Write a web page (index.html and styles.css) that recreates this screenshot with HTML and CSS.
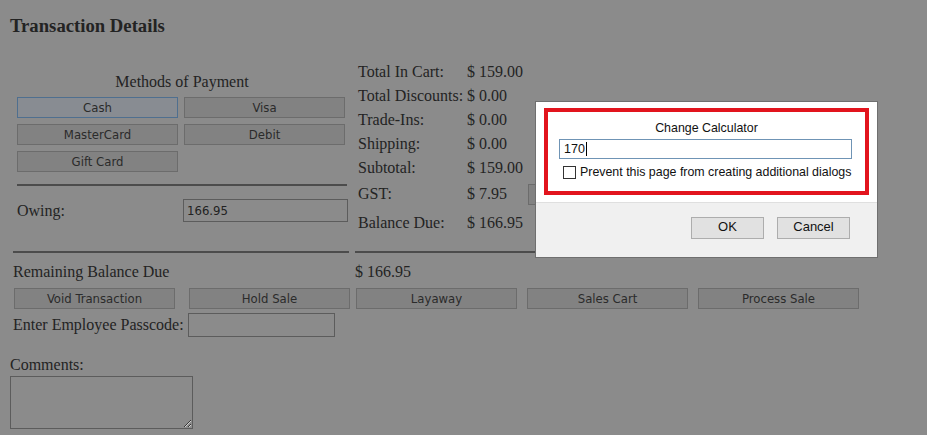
FILE: index.html
```html
<!DOCTYPE html>
<html>
<head>
<meta charset="utf-8">
<title>Transaction Details</title>
<link rel="stylesheet" href="styles.css">
</head>
<body>
<div class="page">
  <h1 class="title">Transaction Details</h1>
  <div class="top">
    <div class="pay">
      <div class="pay-title">Methods of Payment</div>
      <div class="pay-grid">
        <button class="btn btn-focus">Cash</button>
        <button class="btn">Visa</button>
        <button class="btn">MasterCard</button>
        <button class="btn">Debit</button>
        <button class="btn">Gift Card</button>
      </div>
      <hr class="rule rule-pay">
      <div class="owing">
        <span class="owing-label">Owing:</span>
        <input class="field owing-field" value="166.95">
      </div>
    </div>
    <div class="totals">
      <div class="trow"><span class="tl">Total In Cart:</span><span>$ 159.00</span></div>
      <div class="trow"><span class="tl">Total Discounts:</span><span>$ 0.00</span></div>
      <div class="trow"><span class="tl">Trade-Ins:</span><span>$ 0.00</span></div>
      <div class="trow"><span class="tl">Shipping:</span><span>$ 0.00</span></div>
      <div class="trow"><span class="tl">Subtotal:</span><span>$ 159.00</span></div>
      <div class="trow trow-gst"><span class="tl">GST:</span><span class="tv">$ 7.95</span><button class="btn btn-tax">Tax</button></div>
      <div class="trow trow-bal"><span class="tl">Balance Due:</span><span>$ 166.95</span></div>
    </div>
  </div>

  <div class="bottom">
    <hr class="rule rule-left">
    <hr class="rule rule-right">
    <div class="remain">Remaining Balance Due</div>
    <div class="remain">$ 166.95</div>
    <div class="actions actions-left">
      <button class="btn">Void Transaction</button>
      <button class="btn">Hold Sale</button>
    </div>
    <div class="actions actions-right">
      <button class="btn">Layaway</button>
      <button class="btn">Sales Cart</button>
      <button class="btn">Process Sale</button>
    </div>
    <div class="passcode">
      <span class="passcode-label">Enter Employee Passcode:</span>
      <input class="field passcode-field" type="password">
    </div>
  </div>

  <div class="comments">
    <div class="comments-label">Comments:</div>
    <textarea class="comments-box"></textarea>
  </div>
</div>

<div class="dialog">
  <div class="dlg-body">
    <div class="highlight">
      <div class="dlg-title">Change Calculator</div>
      <div class="prompt-field">170<span class="caret"></span></div>
      <label class="dlg-check"><input type="checkbox" class="check"><span>Prevent this page from creating additional dialogs</span></label>
    </div>
  </div>
  <div class="dlg-foot">
    <button class="dlg-btn">OK</button>
    <button class="dlg-btn">Cancel</button>
  </div>
</div>
</body>
</html>
```

FILE: styles.css
```css
* { box-sizing: border-box; }

body {
  margin: 0;
  background: #8b8b8b;
  color: #232323;
  font-family: "Liberation Serif", "Times New Roman", serif;
  font-size: 16px;
  width: 927px;
  height: 435px;
  overflow: hidden;
  position: relative;
}

.page {
  padding-left: 10px;
}

.title {
  margin: 0;
  padding-top: 15px;
  font-size: 18.7px;
  line-height: 22px;
  font-weight: bold;
}

.btn {
  height: 21px;
  margin: 0;
  padding: 1px 0 0;
  background: #828282;
  border: 1px solid #6c6c6c;
  border-radius: 0;
  color: #2b2b2b;
  font-family: "DejaVu Sans Condensed", "DejaVu Sans", sans-serif;
  font-stretch: condensed;
  font-size: 13px;
  line-height: 18px;
  width: 161px;
}

.btn-focus {
  background: #888c92;
  border-color: #4f6f8f;
}

.field {
  height: 23px;
  margin: 0;
  padding: 0 3px;
  background: #8b8b8b;
  border: 1px solid #5c5c5c;
  color: #222;
  font-family: "DejaVu Sans Condensed", "DejaVu Sans", sans-serif;
  font-stretch: condensed;
  font-size: 13px;
}

.rule {
  margin: 0;
  height: 0;
  border: 0;
  border-top: 2px solid #4c4c4c;
}

/* top section */
.top {
  display: flex;
  margin-top: 23px;
}

.pay {
  width: 340px;
  padding-top: 13px;
}

.pay-title {
  line-height: 18px;
  text-align: center;
  padding-left: 4px;
}

.pay-grid {
  display: grid;
  grid-template-columns: 161px 161px;
  column-gap: 6px;
  row-gap: 6px;
  margin: 6px 0 0 7px;
}

.rule-pay {
  margin: 12px 0 0 7px;
  width: 330px;
}

.owing {
  display: flex;
  align-items: center;
  margin: 13px 0 0 7px;
}

.owing-label {
  width: 166px;
  padding-top: 1px;
}

.owing-field {
  width: 165px;
}

.totals {
  margin-left: 5px;
  padding-left: 3px;
}

.trow {
  display: flex;
  align-items: center;
  height: 24px;
  white-space: nowrap;
}

.tl {
  width: 109px;
}

.trow-gst { height: 28px; }
.trow-bal { height: 30px; }

.tv {
  width: 61px;
}

.btn-tax {
  width: 60px;
}

/* bottom section */
.bottom {
  display: grid;
  grid-template-columns: 342px 1fr;
  margin-left: 3px;
  margin-top: 13px;
}

.rule-left { width: 336px; }
.rule-right { width: 345px; }

.remain {
  line-height: 18px;
  margin-top: 10px;
}

.actions {
  display: flex;
  margin-top: 7px;
}

.actions-left {
  justify-content: space-between;
  padding: 0 5px 0 1px;
}

.actions-right {
  gap: 10px;
  padding-left: 1px;
}

.passcode {
  grid-column: 1 / span 2;
  display: flex;
  align-items: center;
  margin-top: 4px;
}

.passcode-label {
  width: 175px;
}

.passcode-field {
  width: 147px;
  height: 24px;
}

.comments {
  margin-top: 19px;
}

.comments-label {
  line-height: 18px;
}

.comments-box {
  display: block;
  margin-top: 2px;
  width: 183px;
  height: 53px;
  background: #8b8b8b;
  border: 1px solid #5c5c5c;
  resize: both;
}

/* dialog */
.dialog {
  position: absolute;
  left: 535px;
  top: 101px;
  width: 343px;
  height: 157px;
  background: #ffffff;
  border: 1px solid #6f6f6f;
  display: flex;
  flex-direction: column;
  font-family: "Liberation Sans", Arial, sans-serif;
  font-size: 12.4px;
  color: #111;
}

.dlg-body {
  height: 100px;
  padding: 6px 0 0 8px;
}

.highlight {
  width: 325px;
  height: 87px;
  border: 4px solid #e2141d;
  padding: 8px 0 0 11px;
}

.dlg-title {
  line-height: 17px;
  text-align: center;
  padding-right: 11px;
}

.prompt-field {
  margin-top: 2px;
  width: 293px;
  height: 20px;
  border: 1px solid #6f94b5;
  padding-left: 4px;
  line-height: 18px;
  font-size: 12.5px;
  display: flex;
  align-items: center;
}

.caret {
  display: inline-block;
  width: 1px;
  height: 14px;
  background: #000;
  margin-left: 1px;
}

.dlg-check {
  display: flex;
  align-items: center;
  margin: 6px 0 0 4px;
  white-space: nowrap;
}

.check {
  appearance: none;
  -webkit-appearance: none;
  width: 13px;
  height: 13px;
  margin: 0 4px 0 0;
  border: 1px solid #333;
  background: #fff;
}

.dlg-foot {
  flex: 1;
  background: #f0f0f0;
  border-top: 1px solid #dfdfdf;
  display: flex;
  justify-content: flex-end;
  align-items: flex-start;
  gap: 13px;
  padding: 14px 27px 0 0;
}

.dlg-btn {
  width: 73px;
  height: 22px;
  margin: 0;
  background: #e1e1e1;
  border: 1px solid #adadad;
  border-radius: 0;
  font-family: "Liberation Sans", Arial, sans-serif;
  font-size: 13px;
  line-height: 18px;
  color: #111;
  padding: 0 0 2px;
}
```
